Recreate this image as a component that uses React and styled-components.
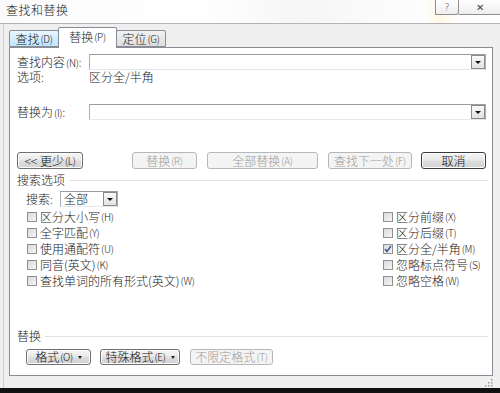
import React from "react";
import styled, { createGlobalStyle } from "styled-components";

const GlobalStyle = createGlobalStyle`
  html, body {
    margin: 0;
    padding: 0;
    background: #111;
  }
  body {
    font-family: "Noto Sans CJK SC", "Liberation Sans", sans-serif;
    font-size: 12px;
    font-weight: 300;
    color: #1a1a1a;
  }
`;

const Page = styled.div`
  width: 500px;
  height: 393px;
  overflow: hidden;
  display: flex;
  flex-direction: column;
  background: #111;
`;

const Window = styled.div`
  height: 388px;
  display: flex;
  flex-direction: column;
  background: #efefef;
`;

const TitleBar = styled.div`
  height: 24px;
  display: flex;
  align-items: flex-start;
  background: linear-gradient(90deg, #fbfbfb 0%, #ffffff 40%, #f6f6f6 60%, #fdfdfd 85%, #fff8e6 88%, #ffffff 92%);
  border-bottom: 1px solid #b4b4b4;
  box-sizing: border-box;
`;

const Title = styled.div`
  padding: 2px 0 0 6px;
  line-height: 16px;
  font-size: 12px;
  letter-spacing: 0.5px;
`;

const CaptionButtons = styled.div`
  margin-left: auto;
  display: flex;
`;

const CaptionButton = styled.div`
  width: ${(p) => p.w}px;
  height: 15px;
  box-sizing: border-box;
  border: 1px solid #8e8e8e;
  border-top: none;
  border-right: ${(p) => (p.last ? "none" : "1px solid #8e8e8e")};
  border-radius: 0 0 ${(p) => (p.last ? "0 0" : "3px 0")};
  background: linear-gradient(#ffffff, #eeeeee);
  display: flex;
  align-items: center;
  justify-content: center;
  font-size: 10px;
  color: #444;
  font-family: "DejaVu Sans", sans-serif;
  & + & {
    border-left: none;
  }
`;

const Frame = styled.div`
  flex: 1;
  display: flex;
  flex-direction: column;
  margin-left: 3px;
  border-left: 1px solid #d0d0d0;
  padding: 3px 7px 0 5px;
`;

const TabStrip = styled.div`
  height: 20px;
  display: flex;
  align-items: flex-end;
  position: relative;
  z-index: 1;
`;

const Tab = styled.div`
  width: ${(p) => p.w}px;
  height: ${(p) => (p.active ? 21 : 17)}px;
  box-sizing: border-box;
  border: 1px solid #898c95;
  border-bottom: ${(p) => (p.active ? "none" : "1px solid #898c95")};
  border-radius: 2px 2px 0 0;
  margin-bottom: ${(p) => (p.active ? -1 : 0)}px;
  margin-left: ${(p) => (p.active ? -1 : 0)}px;
  margin-right: ${(p) => (p.active ? -1 : 0)}px;
  background: ${(p) =>
    p.active
      ? "#ffffff"
      : p.hover
      ? "linear-gradient(#eaf6fd, #bee6fd)"
      : "linear-gradient(#f2f2f2, #dedede)"};
  display: flex;
  align-items: center;
  justify-content: center;
  padding-bottom: ${(p) => (p.active ? 2 : 0)}px;
  font-size: 12px;
  line-height: 14px;
`;

const Mnemonic = styled.span`
  font-size: 10px;
  margin-left: 1px;
  letter-spacing: -0.3px;
`;

const Panel = styled.div`
  height: 329px;
  box-sizing: border-box;
  background: #ffffff;
  border: 1px solid #898c95;
  padding: 6px 6px 10px 7px;
  display: flex;
  flex-direction: column;
`;

const FieldRow = styled.div`
  height: 16px;
  display: flex;
  align-items: center;
  margin-top: ${(p) => p.mt || 0}px;
`;

const FieldLabel = styled.div`
  width: ${(p) => p.w}px;
  flex-shrink: 0;
  white-space: nowrap;
  line-height: 14px;
`;

const Combo = styled.div`
  flex: ${(p) => (p.w ? "none" : 1)};
  width: ${(p) => (p.w ? `${p.w}px` : "auto")};
  height: 16px;
  box-sizing: border-box;
  border: 1px solid #abadb3;
  border-top-color: #9a9ca3;
  border-bottom-color: #e3e9ef;
  background: #fff;
  display: flex;
  align-items: center;
  padding-left: 3px;
  line-height: 14px;
`;

const ComboText = styled.div`
  flex: 1;
`;

const DropButton = styled.div`
  width: 14px;
  height: 14px;
  box-sizing: border-box;
  border: 1px solid #8a8a8a;
  background: linear-gradient(#fafafa, #e2e2e2);
  display: flex;
  align-items: center;
  justify-content: center;
  &::after {
    content: "";
    border-left: 3px solid transparent;
    border-right: 3px solid transparent;
    border-top: 3px solid #111;
  }
`;

const OptionRow = styled.div`
  height: 14px;
  display: flex;
  align-items: center;
  line-height: 14px;
`;

const ButtonRow = styled.div`
  display: flex;
  align-items: center;
  margin-top: ${(p) => p.mt}px;
  padding-left: ${(p) => p.pl || 0}px;
`;

const Button = styled.div`
  width: ${(p) => p.w}px;
  height: ${(p) => p.h || 17}px;
  box-sizing: border-box;
  margin-left: ${(p) => p.ml || 0}px;
  border: 1px solid ${(p) => (p.disabled ? "#b5b8bb" : p.primary ? "#3a3a3a" : "#707070")};
  border-radius: 3px;
  background: ${(p) =>
    p.disabled ? "#f4f4f4" : "linear-gradient(#f6f6f6 0%, #e9e9e9 45%, #dcdcdc 55%, #d2d2d2 100%)"};
  color: ${(p) => (p.disabled ? "#9a9a9a" : "#111")};
  display: flex;
  align-items: center;
  justify-content: center;
  font-size: 12px;
  line-height: 14px;
  white-space: nowrap;
  box-shadow: ${(p) => (p.disabled ? "none" : "inset 0 0 0 1px #fbfbfb")};
`;

const Caret = styled.span`
  margin-left: 5px;
  width: 0;
  height: 0;
  border-left: 2px solid transparent;
  border-right: 2px solid transparent;
  border-top: 3px solid #222;
`;

const GroupHeader = styled.div`
  display: flex;
  align-items: center;
  height: 14px;
  margin-top: ${(p) => p.mt || 0}px;
  line-height: 14px;
  &::after {
    content: "";
    flex: 1;
    margin-left: 4px;
    border-top: 1px solid #e2e2e2;
    margin-right: -2px;
  }
`;

const SearchRow = styled.div`
  display: flex;
  align-items: center;
  height: 16px;
  margin-top: 4px;
  padding-left: 9px;
`;

const Options = styled.div`
  display: grid;
  grid-template-columns: 356px 1fr;
  grid-auto-rows: 16px;
  padding-left: 10px;
  margin-top: 2px;
`;

const Check = styled.div`
  display: flex;
  align-items: center;
  white-space: nowrap;
  line-height: 14px;
`;

const Box = styled.div`
  width: 10px;
  height: 10px;
  box-sizing: border-box;
  border: 1px solid #8f8f8f;
  background: linear-gradient(135deg, #d9d9d9, #f6f6f6);
  margin-right: 3px;
  display: flex;
  align-items: center;
  justify-content: center;
  flex-shrink: 0;
`;

const BottomHeader = styled(GroupHeader)`
  margin-top: auto;
`;

const GripStrip = styled.div`
  flex: 1;
  display: flex;
  justify-content: flex-end;
  align-items: flex-end;
  padding: 0 0 1px 0;
`;

const Label = ({ text, m }) => (
  <>
    {text}
    <Mnemonic>({m})</Mnemonic>
  </>
);

const CheckItem = ({ text, m, checked }) => (
  <Check>
    <Box>
      {checked && (
        <svg width="8" height="8" viewBox="0 0 8 8">
          <path d="M1 4 L3 6.5 L7 1" fill="none" stroke="#3d4f8f" strokeWidth="1.4" />
        </svg>
      )}
    </Box>
    <Label text={text} m={m} />
  </Check>
);

const left = [
  ["区分大小写", "H"],
  ["全字匹配", "Y"],
  ["使用通配符", "U"],
  ["同音(英文)", "K"],
  ["查找单词的所有形式(英文)", "W"],
];

const right = [
  ["区分前缀", "X"],
  ["区分后缀", "T"],
  ["区分全/半角", "M", true],
  ["忽略标点符号", "S"],
  ["忽略空格", "W"],
];

export default function App() {
  return (
    <Page>
      <GlobalStyle />
      <Window>
        <TitleBar>
          <Title>查找和替换</Title>
          <CaptionButtons>
            <CaptionButton w={24}>?</CaptionButton>
            <CaptionButton w={41} last>
              ✕
            </CaptionButton>
          </CaptionButtons>
        </TitleBar>
        <Frame>
          <TabStrip>
            <Tab w={50} hover>
              <Label text="查找" m="D" />
            </Tab>
            <Tab w={59} active>
              <Label text="替换" m="P" />
            </Tab>
            <Tab w={50}>
              <Label text="定位" m="G" />
            </Tab>
          </TabStrip>
          <Panel>
            <FieldRow>
              <FieldLabel w={72}>
                <Label text="查找内容" m="N" />:
              </FieldLabel>
              <Combo>
                <ComboText />
                <DropButton />
              </Combo>
            </FieldRow>
            <OptionRow>
              <FieldLabel w={72}>选项:</FieldLabel>
              <div>区分全/半角</div>
            </OptionRow>
            <FieldRow mt={20}>
              <FieldLabel w={72}>
                <Label text="替换为" m="I" />:
              </FieldLabel>
              <Combo>
                <ComboText />
                <DropButton />
              </Combo>
            </FieldRow>
            <ButtonRow mt={32}>
              <Button w={66}>
                &lt;&lt; <Label text="更少" m="L" />
              </Button>
              <Button w={65} ml={49} disabled>
                <Label text="替换" m="R" />
              </Button>
              <Button w={111} ml={10} disabled>
                <Label text="全部替换" m="A" />
              </Button>
              <Button w={84} ml={10} disabled>
                <Label text="查找下一处" m="F" />
              </Button>
              <Button w={65} ml={9} primary>
                取消
              </Button>
            </ButtonRow>
            <GroupHeader mt={4}>搜索选项</GroupHeader>
            <SearchRow>
              <FieldLabel w={34}>搜索:</FieldLabel>
              <Combo w={58}>
                <ComboText>全部</ComboText>
                <DropButton />
              </Combo>
            </SearchRow>
            <Options>
              {left.map((l, i) => (
                <React.Fragment key={i}>
                  <CheckItem text={l[0]} m={l[1]} checked={l[2]} />
                  <CheckItem text={right[i][0]} m={right[i][1]} checked={right[i][2]} />
                </React.Fragment>
              ))}
            </Options>
            <BottomHeader>替换</BottomHeader>
            <ButtonRow mt={6} pl={9}>
              <Button w={65} h={16}>
                <Label text="格式" m="O" />
                <Caret />
              </Button>
              <Button w={80} h={16} ml={9}>
                <Label text="特殊格式" m="E" />
                <Caret />
              </Button>
              <Button w={83} h={16} ml={10} disabled>
                <Label text="不限定格式" m="T" />
              </Button>
            </ButtonRow>
          </Panel>
          <GripStrip>
            <svg width="9" height="9" viewBox="0 0 9 9">
              {[
                [7, 1],
                [7, 4],
                [4, 4],
                [7, 7],
                [4, 7],
                [1, 7],
              ].map(([x, y], i) => (
                <rect key={i} x={x} y={y} width="1.5" height="1.5" fill="#9a9a9a" />
              ))}
            </svg>
          </GripStrip>
        </Frame>
      </Window>
    </Page>
  );
}
